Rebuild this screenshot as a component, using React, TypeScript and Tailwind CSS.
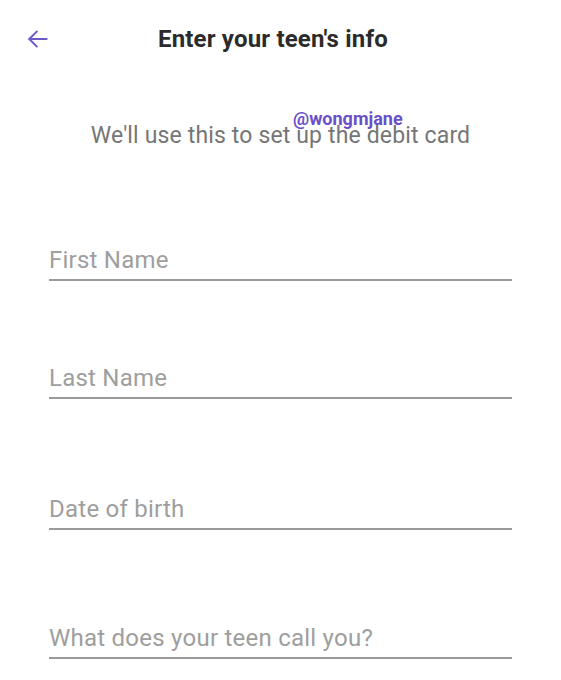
import React from "react";

function Field({ label, mt }: { label: string; mt: string }) {
  return (
    <div className={`${mt} border-b-2 border-[#9a9a9a] pb-[5px]`}>
      <div className="text-[24px] leading-[28px] tracking-[0.24px] text-[#9e9e9e]">{label}</div>
    </div>
  );
}

export default function App() {
  return (
    <div
      className="relative w-[561px] h-[680px] bg-white overflow-hidden"
      style={{ fontFamily: "Roboto, 'Noto Sans', sans-serif" }}
    >
      <div className="flex items-center pt-[25px] pl-[25px]">
        <svg width="26" height="26" viewBox="0 0 24 24" fill="none" stroke="#6a5ac8" strokeWidth="1.8" strokeLinecap="round" strokeLinejoin="round">
          <path d="M20 12H4" />
          <path d="M11 5l-7 7 7 7" />
        </svg>
        <div className="ml-[107px] text-[24px] leading-[28px] font-bold tracking-[0.18px] text-[#2b2b2b]">
          Enter your teen's info
        </div>
      </div>
      <div className="mt-[69px] text-center text-[23px] leading-[28px] tracking-[0.15px] text-[#767676]">
        We'll use this to set up the debit card
      </div>
      <div className="px-[49px]">
        <Field label="First Name" mt="mt-[96px]" />
        <Field label="Last Name" mt="mt-[83px]" />
        <Field label="Date of birth" mt="mt-[96px]" />
        <Field label="What does your teen call you?" mt="mt-[94px]" />
      </div>
      <div className="absolute left-[293px] top-[108px] text-[18px] leading-[22px] font-bold text-[#6a4fc8]">
        @wongmjane
      </div>
    </div>
  );
}
